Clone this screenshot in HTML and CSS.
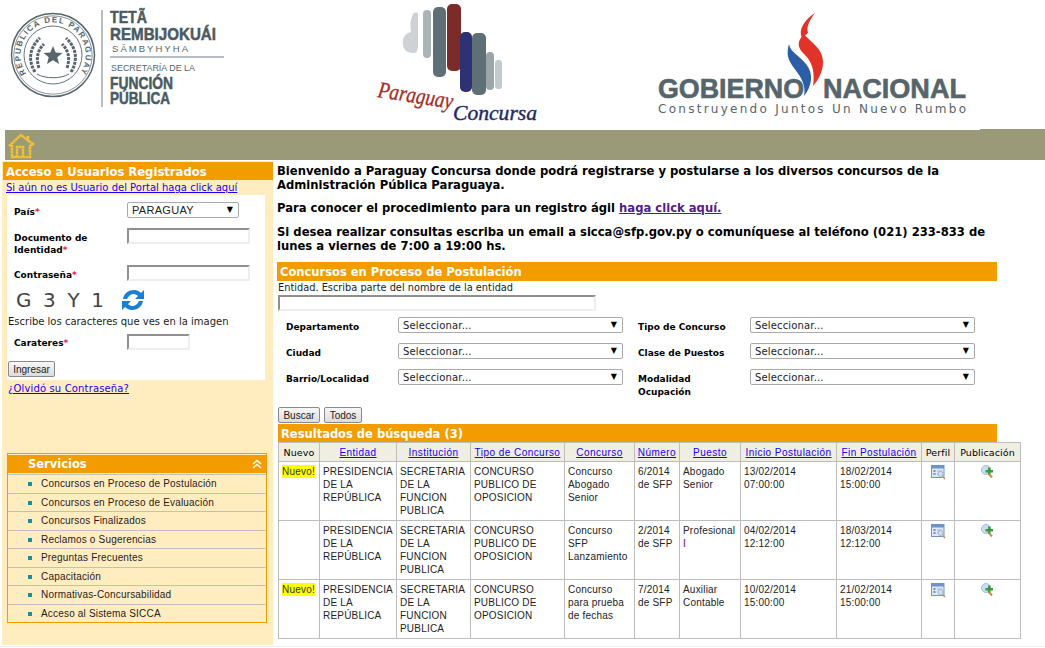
FILE: index.html
```html
<!DOCTYPE html>
<html lang="es">
<head>
<meta charset="utf-8">
<title>Paraguay Concursa</title>
<link rel="stylesheet" href="styles.css">
</head>
<body>
<header class="logos">
  <svg class="logo-sfp" width="240" height="130" viewBox="0 0 240 130">
    <defs><path id="sealarc" d="M26.400 73.600A32.500 32.500 0 1 1 79.600 73.600"/></defs>
    <g fill="none" stroke="#56666c">
      <circle cx="53" cy="55" r="41.500" stroke-width="1.500"/>
      <circle cx="53" cy="55" r="39.200" stroke-width=".7"/>
      <circle cx="53" cy="55" r="29" stroke-width=".9"/>
      <path d="M35 72c-7-11-6-24 5-34M39 68c-3-9-2-17 5-24M71 72c7-11 6-24-5-34M67 68c3-9 2-17-5-24" stroke-width="3" stroke-dasharray="3 1"/>
      <path d="M37 74c8 5 24 5 32 0" stroke-width="1"/>
    </g>
    <polygon points="53,46 55.700,52.500 62.500,52.900 57.300,57.300 59,64 53,60.300 47,64 48.700,57.300 43.500,52.900 50.300,52.500" fill="#56666c"/>
    <text class="seal-text"><textPath href="#sealarc" textLength="140">REPUBLICA DEL PARAGUAY</textPath></text>
    <path d="M102 10v97M110 57h114" stroke="#6f7d83" fill="none"/>
    <g class="sfp-bold">
      <text x="110" y="23" textLength="37" lengthAdjust="spacingAndGlyphs">TETÃ</text>
      <text x="110" y="40" textLength="106" lengthAdjust="spacingAndGlyphs">REMBIJOKUÁI</text>
      <text x="110" y="89" textLength="63" lengthAdjust="spacingAndGlyphs">FUNCIÓN</text>
      <text x="110" y="104" textLength="60" lengthAdjust="spacingAndGlyphs">PÚBLICA</text>
    </g>
    <text class="sfp-small" x="112" y="52" textLength="76">SÃMBYHYHA</text>
    <text class="sfp-small" x="111" y="71" textLength="84" lengthAdjust="spacingAndGlyphs">SECRETARÍA DE LA</text>
  </svg>
  <svg class="logo-concursa" width="175" height="130" viewBox="0 0 175 130">
    <path d="M49 14c-3 6-3 12-2 18-7 1-9 8-8 13 1 6 5 8 11 8 3 0 4-3 4-8V14c0-2-4-2-5 0z" fill="#cdd2d4"/>
    <rect x="59" y="10" width="8" height="48" rx="4" fill="#aab3b7"/>
    <rect x="69" y="7" width="13" height="70" rx="5" fill="#5f6f76"/>
    <rect x="83" y="4" width="14" height="67" rx="5" fill="#7b2b28"/>
    <rect x="96" y="32" width="12" height="60" rx="5" fill="#2e3272"/>
    <rect x="108" y="33" width="14" height="62" rx="5" fill="#5f6f76"/>
    <rect x="122" y="52" width="8" height="38" rx="4" fill="#9aa5aa"/>
    <rect x="131" y="60" width="7" height="29" rx="3" fill="#c3cacd"/>
    <text class="script-red" x="13" y="97" textLength="76" lengthAdjust="spacingAndGlyphs" transform="rotate(9 13 97)">Paraguay</text>
    <text class="script-navy" x="89" y="120" textLength="84" lengthAdjust="spacingAndGlyphs">Concursa</text>
  </svg>
  <svg class="logo-gob" width="330" height="130" viewBox="0 0 330 130">
    <path d="M137 44c-3 10-1 16 5 24 8 10 12 18 10 28 8-10 10-22 2-32-6-8-16-12-17-20z" fill="#2c5ea8"/>
    <path d="M152 34c6 8 19 14 19 28 0 10-5 18-10 24 2-12 0-24-9-32-6-6-8-12 0-20z" fill="#e2332a"/>
    <path d="M163 13c-11 7-17 17-13 25l6-5c-2-7 2-13 7-20z" fill="#e2332a"/>
    <text class="gob-big" x="6" y="98" textLength="146" lengthAdjust="spacingAndGlyphs">GOBIERNO</text>
    <text class="gob-big" x="171" y="98" textLength="143" lengthAdjust="spacingAndGlyphs">NACIONAL</text>
    <text class="gob-sub" x="6" y="113" textLength="308">Construyendo Juntos Un Nuevo Rumbo</text>
  </svg>
</header>

<nav class="topbar">
  <svg width="28" height="26" viewBox="0 0 28 26" fill="none" stroke="#f6c22e" stroke-width="2.500" stroke-dasharray="2.500 .4">
    <path d="M2 13 14 2l12 9-3 2M5 12v12h18V12M10 24V14h6v10M21 3v6"/>
  </svg>
</nav>

<main class="layout">
  <aside class="sidebar">
    <h2 class="side-title">Acceso a Usuarios Registrados</h2>
    <a class="signup" href="#">Si aún no es Usuario del Portal haga click aquí</a>
    <form class="login">
      <div class="row row-pais">
        <label>País<span class="req">*</span></label>
        <div class="sel sel-pais"><select><option>PARAGUAY</option></select></div>
      </div>
      <div class="row row-doc">
        <label>Documento de<br>Identidad<span class="req">*</span></label>
        <input class="field field-login" type="text">
      </div>
      <div class="row row-pass">
        <label>Contraseña<span class="req">*</span></label>
        <input class="field field-login" type="text">
      </div>
      <div class="captcha">
        <div class="captcha-img"><span>G</span><span>3</span><span>Y</span><span>1</span></div>
        <svg width="26" height="26" viewBox="0 0 26 26">
          <path d="M3 12C4 6 9 3 14 3c3 0 5 1 7 3l3-3v9h-9l3-3c-1-1-3-2-4-2-3 0-6 2-7 5z" fill="#1a7fd0"/>
          <path d="M23 14c-1 6-6 9-11 9-3 0-5-1-7-3l-3 3v-9h9l-3 3c1 1 3 2 4 2 3 0 6-2 7-5z" fill="#1a7fd0"/>
        </svg>
      </div>
      <p class="captcha-note">Escribe los caracteres que ves en la imagen</p>
      <div class="row row-chars">
        <label>Carateres<span class="req">*</span></label>
        <input class="field field-chars" type="text">
      </div>
      <button class="btn btn-login" type="button">Ingresar</button>
    </form>
    <a class="forgot" href="#">¿Olvidó su Contraseña?</a>

    <section class="services">
      <h3 class="services-head"><span>Servicios</span>
        <svg width="10" height="10" viewBox="0 0 10 10" fill="none" stroke="#fff" stroke-width="1.500"><path d="M1 5l4-3.500L9 5M1 9l4-3.500L9 9"/></svg>
      </h3>
      <ul class="menu">
        <li><a href="#">Concursos en Proceso de Postulación</a></li>
        <li><a href="#">Concursos en Proceso de Evaluación</a></li>
        <li><a href="#">Concursos Finalizados</a></li>
        <li><a href="#">Reclamos o Sugerencias</a></li>
        <li><a href="#">Preguntas Frecuentes</a></li>
        <li><a href="#">Capacitación</a></li>
        <li><a href="#">Normativas-Concursabilidad</a></li>
        <li><a href="#">Acceso al Sistema SICCA</a></li>
      </ul>
    </section>
  </aside>

  <div class="content">
    <p class="intro intro-1">Bienvenido a Paraguay Concursa donde podrá registrarse y postularse a los diversos concursos de la Administración Pública Paraguaya.</p>
    <p class="intro intro-2">Para conocer el procedimiento para un registro ágil <a class="visited" href="#">haga click aquí.</a></p>
    <p class="intro intro-3">Si desea realizar consultas escriba un email a sicca@sfp.gov.py o comuníquese al teléfono (021) 233-833 de lunes a viernes de 7:00 a 19:00 hs.</p>

    <h2 class="bar bar-search">Concursos en Proceso de Postulación</h2>
    <label class="entity-label">Entidad. Escriba parte del nombre de la entidad</label>
    <input class="field field-entity" type="text">

    <div class="filters">
      <label>Departamento</label>
      <div class="sel"><select><option>Seleccionar...</option></select></div>
      <label>Tipo de Concurso</label>
      <div class="sel"><select><option>Seleccionar...</option></select></div>
      <label>Ciudad</label>
      <div class="sel"><select><option>Seleccionar...</option></select></div>
      <label>Clase de Puestos</label>
      <div class="sel"><select><option>Seleccionar...</option></select></div>
      <label>Barrio/Localidad</label>
      <div class="sel"><select><option>Seleccionar...</option></select></div>
      <label>Modalidad<br>Ocupación</label>
      <div class="sel"><select><option>Seleccionar...</option></select></div>
    </div>

    <div class="actions">
      <button class="btn btn-search" type="button">Buscar</button>
      <button class="btn btn-all" type="button">Todos</button>
    </div>

    <h2 class="bar bar-results">Resultados de búsqueda (3)</h2>
    <table class="results">
      <colgroup>
        <col class="c1"><col class="c2"><col class="c3"><col class="c4"><col class="c5"><col class="c6"><col class="c7"><col class="c8"><col class="c9"><col class="c10"><col class="c11">
      </colgroup>
      <thead>
        <tr>
          <th class="plain">Nuevo</th><th><a href="#">Entidad</a></th><th><a href="#">Institución</a></th><th><a href="#">Tipo de Concurso</a></th><th><a href="#">Concurso</a></th><th><a href="#">Número</a></th><th><a href="#">Puesto</a></th><th><a href="#">Inicio Postulación</a></th><th><a href="#">Fin Postulación</a></th><th class="plain">Perfil</th><th class="plain">Publicación</th>
        </tr>
      </thead>
      <tbody>
        <tr>
          <td class="new"><mark>Nuevo!</mark></td><td>PRESIDENCIA DE LA REPÚBLICA</td><td>SECRETARIA DE LA FUNCION PUBLICA</td><td>CONCURSO PUBLICO DE OPOSICION</td><td>Concurso Abogado Senior</td><td>6/2014 de SFP</td><td>Abogado Senior</td><td>13/02/2014 07:00:00</td><td>18/02/2014 15:00:00</td>
          <td class="ico"><svg class="i-perfil" viewBox="0 0 15 15"><use href="#perfil"/></svg></td><td class="ico"><svg class="i-pub" viewBox="0 0 13 13"><use href="#pub"/></svg></td>
        </tr>
        <tr>
          <td class="new"></td><td>PRESIDENCIA DE LA REPÚBLICA</td><td>SECRETARIA DE LA FUNCION PUBLICA</td><td>CONCURSO PUBLICO DE OPOSICION</td><td>Concurso SFP Lanzamiento</td><td>2/2014 de SFP</td><td>Profesional <span class="visited-text">I</span></td><td>04/02/2014 12:12:00</td><td>18/03/2014 12:12:00</td>
          <td class="ico"><svg class="i-perfil" viewBox="0 0 15 15"><use href="#perfil"/></svg></td><td class="ico"><svg class="i-pub" viewBox="0 0 13 13"><use href="#pub"/></svg></td>
        </tr>
        <tr>
          <td class="new"><mark>Nuevo!</mark></td><td>PRESIDENCIA DE LA REPÚBLICA</td><td>SECRETARIA DE LA FUNCION PUBLICA</td><td>CONCURSO PUBLICO DE OPOSICION</td><td>Concurso para prueba de fechas</td><td>7/2014 de SFP</td><td>Auxiliar Contable</td><td>10/02/2014 15:00:00</td><td>21/02/2014 15:00:00</td>
          <td class="ico"><svg class="i-perfil" viewBox="0 0 15 15"><use href="#perfil"/></svg></td><td class="ico"><svg class="i-pub" viewBox="0 0 13 13"><use href="#pub"/></svg></td>
        </tr>
      </tbody>
    </table>
  </div>
</main>

<svg class="sprites" width="0" height="0">
  <symbol id="perfil" viewBox="0 0 15 15">
    <rect x=".5" y=".5" width="12.500" height="12" fill="#dfe8f6" stroke="#6f93c8"/>
    <rect x="1" y="1" width="12" height="2.500" fill="#6f93c8"/>
    <path d="M2.500 6h2M2.500 9h2" stroke="#5a6f90" stroke-width="1.500"/>
    <path d="M6 6h5M6 9h2" stroke="#9ab0d0"/>
    <circle cx="9.500" cy="9" r="2.500" fill="#cfe0f5" stroke="#8fa8cc" stroke-width=".7"/>
    <path d="M11.500 11.500l2.500 2.500" stroke="#d08a4a" stroke-width="1.500"/>
  </symbol>
  <symbol id="pub" viewBox="0 0 13 13">
    <circle cx="5" cy="5" r="4.500" fill="#c9ddf5" stroke="#9fbde2"/>
    <path d="M7 2.500h2.500V5H12v2.500H9.500V10H7V7.500H4.500V5H7z" fill="#3f9a3a"/>
    <path d="M8 9l3 3.500" stroke="#c98a4a" stroke-width="2"/>
  </symbol>
</svg>
<div class="page-end"></div>
</body>
</html>
```
FILE: styles.css
```css
* { box-sizing: border-box; }
html, body { margin: 0; padding: 0; background: #fff; overflow: hidden; }
body {
  height: 648px;
  color: #000;
  font-family: "DejaVu Sans", Verdana, sans-serif;
  font-size: 10px;
  position: relative;
}
h2, h3, p, ul { margin: 0; padding: 0; }
a { color: #1a00f0; }

/* Header logos */
.logos { display: flex; height: 130px; }
.logos svg { display: block; flex: none; }
.logo-concursa { margin-left: 124px; }
.logo-gob { margin-left: 113px; }
.seal-text { font: 700 8px "Liberation Sans", sans-serif; fill: #56666c; }
.sfp-bold text { font: 700 17px "Liberation Sans", sans-serif; fill: #4a5a60; stroke: #4a5a60; stroke-width: .5; }
.sfp-small { font: 400 9.500px "Liberation Sans", sans-serif; fill: #56666c; }
.script-red { font: italic 400 23px "Liberation Serif", serif; fill: #a82a22; stroke: #a82a22; stroke-width: .3; }
.script-navy { font: italic 400 20px "Liberation Serif", serif; fill: #1f2a66; stroke: #1f2a66; stroke-width: .4; }
.gob-big { font: 700 28px "Liberation Sans", sans-serif; fill: #56656b; stroke: #56656b; stroke-width: .6; }
.gob-sub { font: 400 12px "DejaVu Sans", sans-serif; fill: #56656b; }

/* Top bar */
.topbar { height: 30px; margin-left: 5px; background: #9a9a78; padding: 3px 0 0 2px; position: relative; }
.topbar::after { content: ""; position: absolute; right: 0; top: -1px; width: 65px; height: 1px; background: #9a9a78; }
.topbar svg { display: block; }

/* Page columns */
.layout { display: flex; gap: 4px; margin-top: 1px; }
.sidebar { flex: none; width: 271px; min-height: 484px; margin-left: 2px; background: #ffedc0; padding-top: 1px; }
.content { flex: none; width: 768px; }

/* Sidebar login */
.side-title {
  height: 18px;
  margin-left: 1px;
  padding-left: 3px;
  background: #f39c00;
  color: #fff;
  font-size: 11.600px;
  line-height: 20px;
  font-weight: 700;
}
.signup { display: block; height: 15px; padding-left: 4px; font-size: 10px; line-height: 16px; }
.login { width: 258px; height: 185px; margin-left: 5px; padding-top: 7px; background: #fff; }
.row { display: grid; grid-template-columns: 120px 1fr; }
.row label { padding-left: 7px; font-weight: 700; font-size: 9px; line-height: 12px; }
.row-pais { height: 26px; }
.row-pais label { padding-top: 4px; }
.row-doc { height: 37px; }
.row-doc label { padding-top: 4px; }
.row-pass { height: 22px; }
.row-pass label { padding-top: 4px; }
.row-chars { height: 27px; margin-top: 4px; }
.row-chars label { padding-top: 3px; }
.req { color: #f0204a; }

.captcha { display: flex; align-items: center; gap: 16px; height: 26px; padding-left: 9px; }
.captcha-img {
  display: flex;
  justify-content: space-between;
  width: 88px;
  font-size: 20px;
  line-height: 26px;
  color: #444;
}
.captcha-note { margin-top: 2px; padding-left: 1px; height: 15px; line-height: 14px; font-size: 10px; color: #1c1c1c; }

.field {
  display: block;
  height: 16px;
  padding: 0 2px;
  background: #fff;
  border-style: solid;
  border-width: 2px;
  border-color: #909090 #eee #eee #909090;
}
.field-login { width: 123px; }
.field-chars { width: 63px; }
.field-entity { width: 318px; margin-left: 1px; }

.sel { position: relative; height: 16px; }
.sel select {
  display: block;
  appearance: none;
  width: 100%;
  height: 16px;
  padding: 0 0 0 4px;
  background: #fff;
  border: 1px solid #a9a9a9;
  border-radius: 2px;
  font-family: "DejaVu Sans", sans-serif;
  font-size: 10px;
  letter-spacing: .15px;
  color: #222;
}
.sel-pais select { font-size: 11px; font-family: "Liberation Sans", sans-serif; letter-spacing: .3px; }
.sel::after {
  content: "▼";
  position: absolute;
  right: 6px;
  top: 1px;
  font-size: 8px;
  line-height: 13px;
  color: #000;
  pointer-events: none;
}
.sel-pais { width: 112px; }

.btn {
  display: block;
  height: 16px;
  padding: 0;
  border: 1px solid #8a8a8a;
  border-radius: 2px;
  background: linear-gradient(#f7f7f7, #dcdcdc);
  font-family: "Liberation Sans", sans-serif;
  font-size: 10px;
  line-height: 13px;
  color: #222;
}
.btn-login { width: 47px; margin-left: 1px; }
.btn-search { width: 42px; }
.btn-all { width: 38px; }

.forgot { display: block; margin: 1px 0 0 6px; height: 15px; line-height: 15px; font-size: 10px; letter-spacing: .15px; }

/* Services */
.services {
  display: flex;
  flex-direction: column;
  width: 260px;
  height: 170px;
  margin: 57px 0 0 5px;
  padding-top: 1px;
  border: 1px solid #f39c00;
}
.services-head {
  display: flex;
  align-items: center;
  justify-content: space-between;
  flex: none;
  height: 18px;
  padding: 0 4px 0 20px;
  background: #f39c00;
  color: #fff;
  font-size: 11.500px;
  font-weight: 700;
}
.menu { flex: 1; display: flex; flex-direction: column; list-style: none; margin-top: 1px; }
.menu li {
  flex: 1;
  display: flex;
  align-items: center;
  position: relative;
  padding-left: 33px;
  border-top: 1px solid #c0c0c0;
}
.menu li::before {
  content: "";
  position: absolute;
  left: 20px;
  top: 7px;
  width: 4px;
  height: 4px;
  background: repeating-linear-gradient(90deg, #178f9c 0 2px, transparent 2px 2.500px);
}
.menu a {
  font-family: "Liberation Sans", sans-serif;
  font-size: 10px;
  letter-spacing: .18px;
  color: #2a1a1a;
  text-decoration: none;
}

/* Content text */
.intro { width: 720px; font-size: 11.600px; font-weight: 700; line-height: 14px; }
.intro-1 { margin-top: 3px; }
.intro-2 { margin-top: 9px; }
.intro-3 { margin-top: 10px; }
a.visited { color: #551a8b; }
.visited-text { color: #6a0a6a; }

.bar {
  width: 720px;
  color: #fff;
  background: #f39c00;
  font-size: 11.500px;
  font-weight: 700;
  padding-left: 3px;
}
.bar-search { height: 19px; line-height: 21px; margin-top: 9px; }
.bar-results { width: 719px; height: 18px; line-height: 21px; margin: 1px 0 0 1px; }

.entity-label { display: block; height: 14px; padding-left: 1px; font-size: 9.800px; line-height: 14px; color: #1c1c1c; }

.filters {
  display: grid;
  grid-template-columns: 112px 225px 127px 225px;
  grid-auto-rows: 16px;
  row-gap: 10px;
  margin: 6px 0 0 9px;
}
.filters label { font-weight: 700; font-size: 9px; line-height: 13px; padding-top: 4px; white-space: nowrap; }
.filters label:nth-child(4n+3) { padding-left: 15px; }

.actions { display: flex; gap: 4px; margin: 22px 0 0 1px; }

/* Results table */
.results {
  table-layout: fixed;
  width: 742px;
  margin-left: 1px;
  border-collapse: collapse;
  font-family: "Liberation Sans", sans-serif;
  font-size: 10px;
  letter-spacing: .2px;
  line-height: 13px;
  color: #222;
}
.c1 { width: 41px; }
.c2 { width: 77px; }
.c3 { width: 74px; }
.c4 { width: 94px; }
.c5 { width: 70px; }
.c6 { width: 45px; }
.c7 { width: 61px; }
.c8 { width: 96px; }
.c9 { width: 85px; }
.c10 { width: 33px; }
.c11 { width: 66px; }
.results th, .results td { border: 1px solid #bdbdbd; }
.results th {
  height: 19px;
  padding: 1px 0 0;
  background: #f0eee3;
  font-weight: 400;
  text-align: center;
  white-space: nowrap;
  color: #111;
  letter-spacing: .45px;
}
.results th.plain { font-family: "DejaVu Sans", sans-serif; font-size: 9.500px; letter-spacing: .1px; color: #000; }
.results td { height: 59px; padding: 0 3px; vertical-align: top; padding-top: 3px; }
.results mark { background: #ff0; color: #333; padding: 0; display: inline-block; }
.results td.new { padding: 3px 0 0 3px; }
.results td.ico { text-align: center; padding: 3px 0 0; }
.i-perfil { width: 15px; height: 15px; display: inline-block; }
.i-pub { width: 13px; height: 13px; display: inline-block; }

.sprites { position: absolute; }
.page-end { position: absolute; left: 0; right: 0; bottom: 1px; height: 1px; background: #eee; }
```
